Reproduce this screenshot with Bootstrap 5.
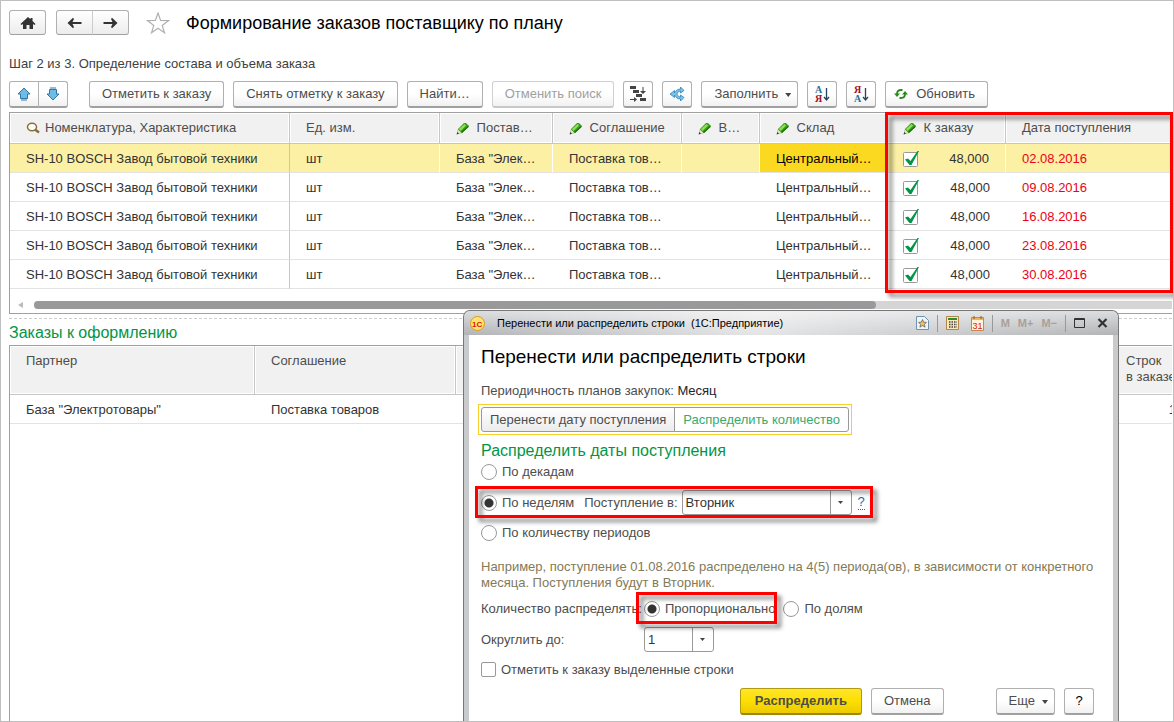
<!DOCTYPE html>
<html lang="ru">
<head>
<meta charset="utf-8">
<meta name="viewport" content="width=device-width, initial-scale=1">
<title>Формирование заказов поставщику по плану</title>
<link rel="stylesheet" href="https://cdn.jsdelivr.net/npm/bootstrap@5.3.0/dist/css/bootstrap.min.css">
<style>
body{font:13px/16px "Liberation Sans",Arial,sans-serif;color:#333;background:#fff}
.page{min-height:100vh;border:1px solid #bfbfbf;padding:9px 1px 0 8px}
h1,h2,h3{margin:0;font-weight:400}
h1{font-size:18px;line-height:24px;color:#000}
h2{font-size:19px;line-height:24px;color:#000}
h3{font-size:16px;line-height:20px;color:#009646}
.step{margin:20px 0 8px;line-height:18px;color:#404040}
.tool{--bs-btn-font-size:13px;--bs-btn-line-height:16px;--bs-btn-padding-x:12px;--bs-btn-padding-y:0;--bs-btn-color:#4d4d4d;--bs-btn-border-color:#b0b0b0;--bs-btn-border-radius:3px;--bs-btn-disabled-color:#a0a0a0;--bs-btn-disabled-border-color:#d0d0d0;height:27px;border-bottom:2px solid #a0a0a0;background:linear-gradient(#fff 50%,#f1f1f1);white-space:nowrap;display:inline-flex;align-items:center;justify-content:center}
.tool:disabled{border-bottom-color:#c8c8c8;opacity:1}
.square{width:30px;padding:0}
.nav-key{height:25px;width:37px;padding:0;background:linear-gradient(#fff,#ececec);border-bottom-width:1px}
.nav-pair{margin:0 17px 0 10px}
.toolbar{gap:9px}
.btn-group>.nav-key+.nav-key{border-left-color:#ccc}
.caret{width:6px;height:4px;background:#444;clip-path:polygon(0 0,100% 0,50% 100%);margin-left:7px;margin-top:2px}
.drop{padding-right:6px}
.grid-box{border:1px solid #a0a0a0;border-right:0}
.grid{width:100%;table-layout:fixed;border-collapse:separate;border-spacing:0}
.grid th{font-weight:400;color:#4d4d4d;background:#f1f1f1;border:solid #c6c6c6;border-width:0 1px 1px 0;box-shadow:inset 0 0 0 1px #fff;padding:0 16px;height:31px;white-space:nowrap}
.grid td{height:29px;padding:1px 16px 0;border-bottom:1px solid #e3e3e3;white-space:nowrap}
.grid th:last-child{border-right:0}
.plan td:first-child{border-right:1px solid #c6c6c6}
.plan tr.picked td{background:#fcf0a5;border-right:1px solid #fff}
.plan tr.picked td:first-child{border-right-color:#c6c6c6}
.plan tr.picked td.current{background:#fbd920;color:#000}
.plan .due{color:#f00014}
.hbar{height:24px;padding-left:8px}
.hbar .arrow{width:5px;height:6px;background:#bbb;clip-path:polygon(100% 0,100% 100%,0 50%)}
.track{height:8px;margin-left:11px;background:#d5d5d5;border-radius:4px 0 0 4px}
.thumb{height:8px;width:74%;background:#999;border-radius:4px}
.splitter{border-top:1px dashed #ccc;margin-top:4px;padding-top:4px;margin-bottom:2px}
.orders{overflow:hidden;border-bottom:0}
.orders .grid{width:calc(100% + 20px)}
.orders th{height:49px;vertical-align:top;padding-top:7px}
.frame{position:absolute;border:3px solid #fd0000;filter:drop-shadow(4px 4px 2px rgba(0,0,0,.5));pointer-events:none}
.frame-dates{top:-1px;right:-1px;bottom:20px;width:288px}
.frame-weeks{inset:-4px -8px -3px -6px}
.frame-share{inset:-9px -2px -7px -8px}
.tick,.dot,.empty-box{appearance:none;margin:0;flex:none}
.tick{width:17px;height:18px;background:url("data:image/svg+xml,%3Csvg xmlns='http://www.w3.org/2000/svg' viewBox='0 0 17 18'%3E%3Crect x='.5' y='2.5' width='14' height='14' rx='1' fill='%23fff' stroke='%23999'/%3E%3Cpath d='M2 9.500l3-1 2.500 2.500L14.500 1H16L8.500 15H6.500z' fill='%23009646'/%3E%3C/svg%3E")}
.dot{width:16px;height:16px;border:1px solid #999;border-radius:50%;background:#fff}
.dot:checked{background:radial-gradient(circle,#333 0 4px,#fff 5px)}
.empty-box{width:15px;height:15px;border:1px solid #999;border-radius:2px}
.choice{display:flex;gap:5px}
.week-label{margin:0 4px 0 10px}
.dialog-win{position:absolute;top:309px;right:54px;bottom:0;width:656px;border:solid #777;border-width:1px 1px 0;border-radius:7px 7px 0 0;background:#c9cacc;padding:0 5px;overflow:hidden}
.titlebar{height:24px;margin:0 -5px;padding:0 10px 0 6px;font-size:11px;color:#000;background:linear-gradient(90deg,rgba(255,255,255,0),rgba(255,255,255,.65) 45%,rgba(255,255,255,0)),linear-gradient(#dcdddf,#b2b3b6)}
.titlebar button{border:0;padding:0;background:none;display:flex;align-items:center;color:#aaa098;font:bold 11px/16px "Liberation Sans",Arial,sans-serif}
.vline{width:1px;height:17px;background:#999}
.dialog-body{background:#fff;padding:10px 12px 5px;height:100%;color:#4d4d4d}
.period{margin-top:14px}
.stack{gap:10px;margin-top:3px}
.switcher{border:1px solid #f8cf2c;padding:2px;margin:5px 0 6px -3px;width:max-content}
.switcher .tool{height:25px;border:1px solid #999;padding:0 8px}
.switcher .tool:first-child{background:linear-gradient(#fff,#ececec)}
.switcher .active{background:#fff;color:#37aa6c}
.pick{appearance:none;height:25px;border:1px solid #999;border-radius:3px;padding:0 24px 0 3px;color:#333;font:inherit;background:url("data:image/svg+xml,%3Csvg xmlns='http://www.w3.org/2000/svg' width='21' height='25'%3E%3Cpath d='M.5 0v25' stroke='%23999'/%3E%3Cpath d='M8 11h5l-2.500 3z' fill='%23444'/%3E%3C/svg%3E") right center no-repeat #fff}
.day{width:170px}
.round{width:70px}
.caption{width:163px}
.hint{color:#827a59;margin:8px 0 0}
.help{color:#0b72b9;text-decoration:none;border-bottom:1px dotted #0b72b9;line-height:14px;margin-left:6px}
.primary-act{background:linear-gradient(#ffe52e,#fddf00 50%,#ecca00);border-color:#b09a10;border-bottom-color:#9c8808;font-weight:700;padding:0 14px}
.actions{margin-right:7px}
.spread{margin-left:43px}
svg{flex:none}
</style>
</head>
<body>
<svg class="d-none" aria-hidden="true">
<symbol id="pencil" viewBox="0 0 13 13"><path d="M1 12l1-5 6-6h2l2.500 2.500v1.500L6 11z" fill="#3aa21a"/><path d="M3 7l5.500-5L10 3.500 4.500 9z" fill="#8ee05c"/><path d="M6 11l6.500-6v-1.500L5 10z" fill="#1d6d0c"/><path d="M1 12l1-4.500L5.500 11z" fill="#e9e3cc"/><path d="M.5 12.500l.8-2.500 1.700 1.700z" fill="#333"/></symbol>
</svg>
<main class="page position-relative overflow-hidden d-flex flex-column">
<header class="d-flex align-items-center">
<button class="btn tool nav-key" aria-label="Домой"><svg width="16" height="14" viewBox="0 0 16 14"><path d="M8 1L.5 8l1 1L3 8v5h3.500V9h3v4H13V8l1.500 1 1-1L12.500 5V2h-2v1.200z" fill="#333"/></svg></button>
<div class="btn-group nav-pair"><button class="btn tool nav-key" aria-label="Назад"><svg width="15" height="12" viewBox="0 0 15 12"><path d="M.5 6L6 .8 7 2 5.500 5h9v2h-9L7 10l-1 1.200z" fill="#333"/></svg></button><button class="btn tool nav-key" aria-label="Вперед"><svg width="15" height="12" viewBox="0 0 15 12"><path d="M14.500 6L9 .8 8 2l1.500 3h-9v2h9L8 10l1 1.200z" fill="#333"/></svg></button></div>
<svg class="me-3" width="24" height="22" viewBox="0 0 24 22"><path d="M12 1l2.600 7.500 8 .1-6.400 4.800 2.300 7.400L12 16.300l-6.500 4.500 2.300-7.400L1.400 8.600l8-.1z" fill="#fff" stroke="#b0b0b0" stroke-width="1.200"/></svg>
<h1>Формирование заказов поставщику по плану</h1>
</header>
<p class="step">Шаг 2 из 3. Определение состава и объема заказа</p>
<div class="d-flex toolbar">
<div class="btn-group me-2 pe-1"><button class="btn tool square" aria-label="Вверх"><svg width="14" height="14" viewBox="0 0 14 14"><path d="M7 1l6 6h-2.500v4.500h-7V7H1z" fill="#6fbbe6" stroke="#2f76a8"/><path d="M4 13h6" stroke="#2f76a8"/></svg></button><button class="btn tool square" aria-label="Вниз"><svg width="14" height="14" viewBox="0 0 14 14"><path d="M7 13l6-6h-2.500V2.500h-7V7H1z" fill="#6fbbe6" stroke="#2f76a8"/><path d="M4 1h6" stroke="#2f76a8"/></svg></button></div>
<button class="btn tool">Отметить к заказу</button>
<button class="btn tool">Снять отметку к заказу</button>
<button class="btn tool">Найти…</button>
<button class="btn tool" disabled>Отменить поиск</button>
<button class="btn tool square" aria-label="Перенести строки"><svg width="18" height="16" viewBox="0 0 18 16" fill="#444"><path d="M1 0h6v3H1zM4 4h6v3H4zM7 8h6v3H7zM11 12h6v3h-6zM13.500 1h1v4H17l-3 3-3-3h2.500zM1 13h4v-2l3 2.500L5 16v-2H1z"/></svg></button>
<button class="btn tool square" aria-label="Разделить"><svg width="16" height="16" viewBox="0 0 16 16"><path d="M15 4.500L11.500 1v2C8 3 7 5 5.500 7V4.500L1 8l4.500 3.500V9C7 11 8 13 11.500 13v2L15 11.500 11.500 9v2C9 11 8.500 9 8 8c.5-1 1-3 3.500-3v2z" fill="#7cc3ea" stroke="#2f83b8" stroke-width=".8"/></svg></button>
<button class="btn tool drop">Заполнить<span class="caret"></span></button>
<button class="btn tool square" aria-label="Сортировать по возрастанию"><svg width="16" height="18" viewBox="0 0 16 18" font-family="Liberation Serif,serif" font-weight="700" font-size="10"><text x="1" y="8" fill="#2870a0">А</text><text x="1" y="17" fill="#a01020">Я</text><path d="M12.500 3v11M10 12l2.500 3 2.500-3" stroke="#29445a" fill="none" stroke-width="1.300"/></svg></button>
<button class="btn tool square" aria-label="Сортировать по убыванию"><svg width="16" height="18" viewBox="0 0 16 18" font-family="Liberation Serif,serif" font-weight="700" font-size="10"><text x="1" y="8" fill="#a01020">Я</text><text x="1" y="17" fill="#2870a0">А</text><path d="M12.500 3v11M10 12l2.500 3 2.500-3" stroke="#29445a" fill="none" stroke-width="1.300"/></svg></button>
<button class="btn tool ps-2"><svg class="me-2" width="14" height="12" viewBox="0 0 14 12"><path d="M3 6Q3 2 7 2h1.500M11 6q0 4-4 4H5.500" fill="none" stroke="#2c8a1c" stroke-width="1.800"/><path d="M0 5.500h6L3 9zM8 6.500h6L11 3z" fill="#2c8a1c"/></svg>Обновить</button>
</div>
<section class="grid-box position-relative mt-1">
<table class="grid plan">
<colgroup><col style="width:280px"><col style="width:150px"><col style="width:113px"><col style="width:129px"><col style="width:78px"><col style="width:127px"><col style="width:119px"><col></colgroup>
<thead><tr>
<th><div class="d-flex align-items-center"><svg class="me-1" width="15" height="12" viewBox="0 0 15 12"><ellipse cx="6" cy="5" rx="4.500" ry="3.700" fill="#fff" stroke="#85703a" stroke-width="1.500"/><path d="M9 7.500l4 3" stroke="#85703a" stroke-width="2.500"/></svg>Номенклатура, Характеристика</div></th>
<th>Ед. изм.</th>
<th><svg class="me-1" width="13" height="13"><use href="#pencil"/></svg> Постав…</th>
<th><svg class="me-1" width="13" height="13"><use href="#pencil"/></svg> Соглашение</th>
<th><svg class="me-1" width="13" height="13"><use href="#pencil"/></svg> В…</th>
<th><svg class="me-1" width="13" height="13"><use href="#pencil"/></svg> Склад</th>
<th><svg class="me-1" width="13" height="13"><use href="#pencil"/></svg> К заказу</th>
<th>Дата поступления</th></tr></thead>
<tbody>
<tr class="picked"><td>SH-10 BOSCH Завод бытовой техники</td><td>шт</td><td>База "Элек…</td><td>Поставка тов…</td><td></td><td class="current">Центральный…</td><td class="qty"><div class="d-flex align-items-center justify-content-between"><input class="tick" type="checkbox" checked aria-label="К заказу 02.08.2016">48,000</div></td><td class="due">02.08.2016</td></tr>
<tr><td>SH-10 BOSCH Завод бытовой техники</td><td>шт</td><td>База "Элек…</td><td>Поставка тов…</td><td></td><td>Центральный…</td><td class="qty"><div class="d-flex align-items-center justify-content-between"><input class="tick" type="checkbox" checked aria-label="К заказу 09.08.2016">48,000</div></td><td class="due">09.08.2016</td></tr>
<tr><td>SH-10 BOSCH Завод бытовой техники</td><td>шт</td><td>База "Элек…</td><td>Поставка тов…</td><td></td><td>Центральный…</td><td class="qty"><div class="d-flex align-items-center justify-content-between"><input class="tick" type="checkbox" checked aria-label="К заказу 16.08.2016">48,000</div></td><td class="due">16.08.2016</td></tr>
<tr><td>SH-10 BOSCH Завод бытовой техники</td><td>шт</td><td>База "Элек…</td><td>Поставка тов…</td><td></td><td>Центральный…</td><td class="qty"><div class="d-flex align-items-center justify-content-between"><input class="tick" type="checkbox" checked aria-label="К заказу 23.08.2016">48,000</div></td><td class="due">23.08.2016</td></tr>
<tr><td>SH-10 BOSCH Завод бытовой техники</td><td>шт</td><td>База "Элек…</td><td>Поставка тов…</td><td></td><td>Центральный…</td><td class="qty"><div class="d-flex align-items-center justify-content-between"><input class="tick" type="checkbox" checked aria-label="К заказу 30.08.2016">48,000</div></td><td class="due">30.08.2016</td></tr>
</tbody></table>
<div class="hbar d-flex align-items-center pt-2"><span class="arrow"></span><div class="track flex-grow-1"><div class="thumb"></div></div></div>
<div class="frame frame-dates"></div>
</section>
<div class="splitter"><h3>Заказы к оформлению</h3></div>
<section class="grid-box orders flex-grow-1">
<table class="grid">
<colgroup><col style="width:245px"><col style="width:201px"><col><col style="width:82px"></colgroup>
<thead><tr><th>Партнер</th><th>Соглашение</th><th></th><th>Строк<br>в заказе</th></tr></thead>
<tbody><tr><td>База "Электротовары"</td><td>Поставка товаров</td><td></td><td class="text-end">1</td></tr></tbody>
</table>
</section>

<section class="dialog-win" role="dialog" aria-label="Перенести или распределить строки">
<div class="titlebar d-flex align-items-center">
<svg width="15" height="15" viewBox="0 0 15 15"><circle cx="7.500" cy="7.500" r="7" fill="#ffe36a" stroke="#d79b2a"/><text x="2" y="11" font-size="8" font-weight="700" fill="#d8140c">1С</text></svg>
<span class="flex-grow-1 ms-2 ps-1">Перенести или распределить строки&nbsp; (1С:Предприятие)</span>
<div class="d-flex align-items-center gap-2">
<button aria-label="Избранное"><svg width="13" height="14" viewBox="0 0 13 14"><path d="M.5.5h8l4 4v9H.5z" fill="#eef5fa" stroke="#6f93ac"/><path d="M6.500 3.500l1.200 2.700 2.800.2-2.100 1.900.7 2.900-2.600-1.600-2.600 1.600.7-2.900-2.100-1.900 2.800-.2z" fill="#f7bf53" stroke="#555" stroke-width=".7"/></svg></button>
<span class="vline"></span>
<button aria-label="Калькулятор"><svg width="13" height="14" viewBox="0 0 13 14"><path d="M.5.500h12v13H.5z" fill="#fbe7b8" stroke="#b3854a"/><path d="M2 2h9v2H2z" fill="#2f8c2c"/><path d="M3 6h8M3 8.500h8M3 11h8" stroke="#444" stroke-width="1.500" stroke-dasharray="1.500 1"/></svg></button>
<button class="ms-1" aria-label="Календарь"><svg width="13" height="15" viewBox="0 0 13 15"><path d="M.5 1.500h12v13H.5z" fill="#fff3d8" stroke="#c58a4a"/><path d="M1 2h11v2H1z" fill="#f0b35e"/><path d="M3 0v3M10 0v3" stroke="#8c5a2a"/><text x="1.500" y="13" font-size="9" font-weight="400" fill="#e02010">31</text></svg></button>
<span class="vline"></span>
<button>M</button><button>M+</button><button>M−</button>
<span class="vline"></span>
<button aria-label="Развернуть"><svg width="11" height="10" viewBox="0 0 11 10"><path d="M.5.500h10v9H.5zM0 1.500h11" fill="none" stroke="#333"/></svg></button>
<button class="ms-1" aria-label="Закрыть"><svg width="11" height="10" viewBox="0 0 11 10"><path d="M1.500 1l8 8M9.500 1l-8 8" stroke="#333" stroke-width="2.200"/></svg></button>
</div></div>
<div class="dialog-body">
<h2>Перенести или распределить строки</h2>
<div class="period">Периодичность планов закупок: <span class="text-dark">Месяц</span></div>
<div class="switcher"><div class="btn-group d-flex"><button class="btn tool">Перенести дату поступления</button><button class="btn tool active">Распределить количество</button></div></div>
<h3>Распределить даты поступления</h3>
<div class="stack d-flex flex-column align-items-start">
<label class="choice"><input class="dot" type="radio" name="period">По декадам</label>
<div class="d-flex align-items-center position-relative">
<label class="choice"><input class="dot" type="radio" name="period" checked>По неделям</label>
<label class="week-label" for="day">Поступление в:</label>
<select class="pick day" id="day"><option>Вторник</option></select>
<a class="help" href="#">?</a>
<div class="frame frame-weeks"></div>
</div>
<label class="choice"><input class="dot" type="radio" name="period">По количеству периодов</label>
<p class="hint">Например, поступление 01.08.2016 распределено на 4(5) периода(ов), в зависимости от конкретного месяца. Поступления будут в Вторник.</p>
<div class="d-flex"><span class="caption">Количество распределять:</span>
<label class="choice position-relative me-2"><input class="dot" type="radio" name="share" checked>Пропорционально<span class="frame frame-share"></span></label>
<label class="choice"><input class="dot" type="radio" name="share">По долям</label></div>
<div class="d-flex align-items-center"><label class="caption" for="rnd">Округлить до:</label><select class="pick round" id="rnd"><option>1</option></select></div>
<label class="choice"><input class="empty-box" type="checkbox">Отметить к заказу выделенные строки</label>
<div class="d-flex toolbar align-self-end actions"><button class="btn tool primary-act">Распределить</button><button class="btn tool">Отмена</button><button class="btn tool drop spread">Еще<span class="caret"></span></button><button class="btn tool square text-black">?</button></div>
</div></div></section>
</main>
<script src="https://cdn.jsdelivr.net/npm/bootstrap@5.3.0/dist/js/bootstrap.bundle.min.js"></script>
</body>
</html>
